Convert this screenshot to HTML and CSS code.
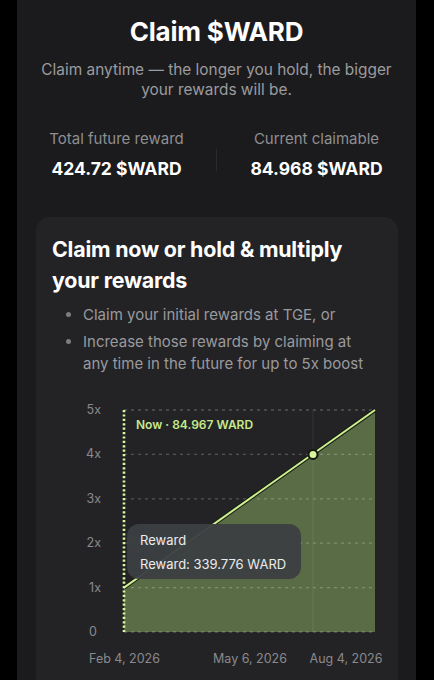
FILE: index.html
```html
<!DOCTYPE html>
<html lang="en">
<head>
    <meta charset="UTF-8">
    <meta name="viewport" content="width=device-width, initial-scale=1.0">
    <title>Claim $WARD</title>
    <link rel="stylesheet" href="styles.css">
</head>

<body>

<div class="panel">
  <div class="header">
    <h1>Claim $WARD</h1>
    <p class="subtitle">Claim anytime — the longer you hold, the bigger<br>your rewards will be.</p>
  </div>

  <div class="stats">
    <div class="stat">
      <div class="stat-label">Total future reward</div>
      <div class="stat-value">424.72 $WARD</div>
    </div>
    <div class="divider"></div>
    <div class="stat">
      <div class="stat-label">Current claimable</div>
      <div class="stat-value">84.968 $WARD</div>
    </div>
  </div>

  <div class="card">
    <h2>Claim now or hold &amp; multiply your rewards</h2>
    <ul class="points">
      <li>Claim your initial rewards at TGE, or</li>
      <li>Increase those rewards by claiming at<br>any time in the future for up to 5x boost</li>
    </ul>

    <div class="chart">
      <svg width="330" height="280" viewBox="0 0 330 280">
        <polygon points="72,190.6 323,13 323,235 72,235" fill="#5a6c45"/>
        <line x1="261" y1="13" x2="261" y2="235" stroke="rgba(255,255,255,0.08)" stroke-width="1"/>

        <g stroke="rgba(255,255,255,0.22)" stroke-width="1.3" stroke-dasharray="3 4">
          <line x1="72" y1="13" x2="323" y2="13"/>
          <line x1="72" y1="57.4" x2="323" y2="57.4"/>
          <line x1="72" y1="101.8" x2="323" y2="101.8"/>
          <line x1="72" y1="146.2" x2="323" y2="146.2"/>
          <line x1="72" y1="190.6" x2="323" y2="190.6"/>
          <line x1="72" y1="235" x2="323" y2="235"/>
        </g>

        <g class="axis" text-anchor="end">
          <text x="49" y="17">5x</text>
          <text x="49" y="61.4">4x</text>
          <text x="49" y="105.8">3x</text>
          <text x="49" y="150.2">2x</text>
          <text x="49" y="194.6">1x</text>
          <text x="45" y="239">0</text>
        </g>

        <line x1="72" y1="190.6" x2="323" y2="13" stroke="#1a1d14" stroke-width="4"/>
        <line x1="72" y1="190.6" x2="323" y2="13" stroke="#cdf292" stroke-width="2"/>
        <line x1="72" y1="13" x2="72" y2="235" stroke="#dcf7a2" stroke-width="2.6" stroke-dasharray="2.2 2.2"/>

        <circle cx="261" cy="57.4" r="4.5" fill="#d7f79c" stroke="#15170f" stroke-width="2"/>

        <text class="now" x="84" y="32">Now · 84.967 WARD</text>

        <g class="axis">
          <text x="37" y="266">Feb 4, 2026</text>
          <text x="198" y="266" text-anchor="middle">May 6, 2026</text>
          <text x="294" y="266" text-anchor="middle">Aug 4, 2026</text>
        </g>
      </svg>

      <div class="tooltip">
        <div>Reward</div>
        <div>Reward: 339.776 WARD</div>
      </div>
    </div>
  </div>
</div>

</body>
</html>
```

FILE: styles.css
```css
body {
    font-family: Inter, "Noto Sans", sans-serif;
    background-color: #000;
    margin: 0;
    padding: 0;
}

.panel {
    width: 399px;
    min-height: 680px;
    margin-left: 17px;
    background-color: #1b1b1d;
    padding-top: 16px;
    box-sizing: border-box;
}

.header {
    text-align: center;
}

h1 {
    margin: 0;
    color: #fff;
    font-size: 26px;
    line-height: 32px;
    font-weight: 700;
    letter-spacing: -0.2px;
}

.subtitle {
    margin: 12px 0 0;
    color: #9b9b9e;
    font-size: 15.4px;
    line-height: 20px;
}

.stats {
    display: flex;
    align-items: center;
    margin-top: 29px;
}

.stat {
    flex: 1;
    text-align: center;
}

.stat-label {
    color: #8f8f92;
    font-size: 15px;
    line-height: 20px;
}

.stat-value {
    margin-top: 9px;
    color: #fff;
    font-size: 17.5px;
    line-height: 22px;
    font-weight: 700;
}

.divider {
    width: 1px;
    height: 22px;
    margin-top: 10px;
    background-color: #2b2b2e;
}

.card {
    margin: 37px 18px 0 19px;
    min-height: 463px;
    background-color: #232326;
    border-radius: 14px 14px 0 0;
    padding: 17px 16px 0;
    box-sizing: border-box;
}

h2 {
    margin: 0;
    color: #fff;
    font-size: 21.4px;
    line-height: 31px;
    font-weight: 700;
    letter-spacing: -0.2px;
    max-width: 310px;
}

.points {
    margin: 8px 0 0;
    padding-left: 31px;
    color: #9a9a9d;
    font-size: 15px;
    line-height: 22px;
}

.points li {
    margin-bottom: 5px;
}

.points li::marker {
    color: #7d7d80;
}

.chart {
    position: relative;
    margin-top: 22px;
}

.chart svg {
    display: block;
}

.axis text {
    fill: #8a8a8d;
    font-size: 12.5px;
    font-family: Inter, "Noto Sans", sans-serif;
}

.now {
    fill: #c5e98b;
    font-size: 12px;
    font-weight: 600;
    font-family: Inter, "Noto Sans", sans-serif;
}

.tooltip {
    position: absolute;
    left: 75px;
    top: 127px;
    width: 174px;
    height: 55px;
    box-sizing: border-box;
    padding: 4px 13px;
    background-color: rgba(60, 63, 67, 0.96);
    border-radius: 12px;
    color: #ececec;
    font-size: 13px;
    line-height: 24px;
}
```
